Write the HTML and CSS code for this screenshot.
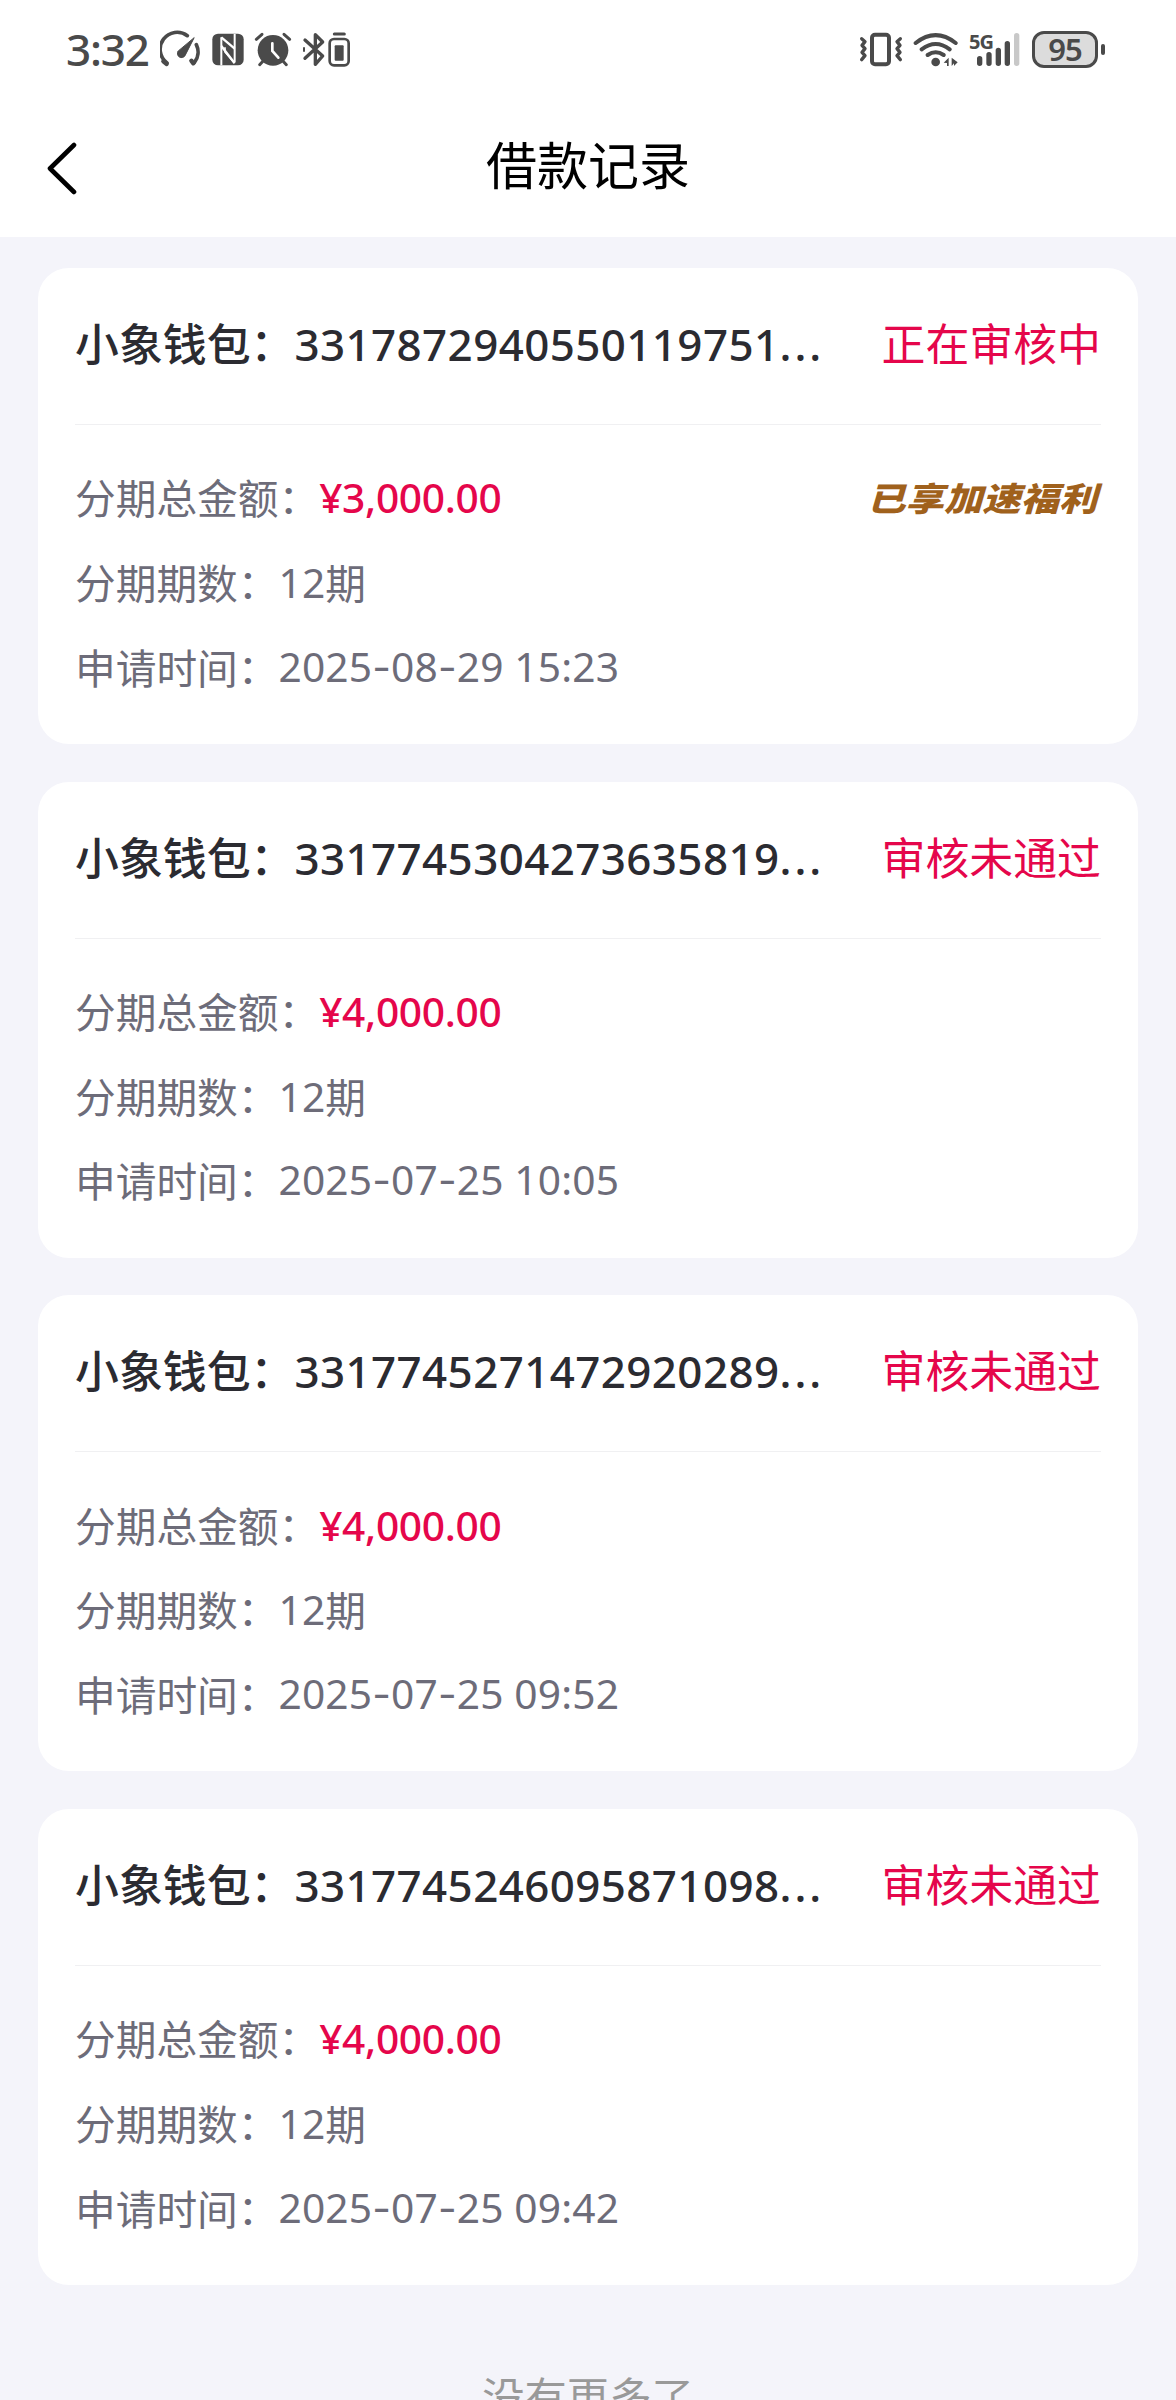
FILE: index.html
```html
<!DOCTYPE html>
<html lang="zh-CN">
<head>
    <meta charset="UTF-8">
    <meta name="viewport" content="width=device-width, initial-scale=1.0">
    <title>借款记录</title>
    <link rel="stylesheet" href="styles.css">
</head>
<body>
    <div class="page">
        <div class="top">
            <div class="statusbar">
                <div class="statusbar-left">
                    <span class="clock">3:32</span>
                    <svg class="icon gauge" width="40" height="40" viewBox="330 30 120 120" fill="none" stroke="#4a4a4a" stroke-width="11" stroke-linecap="round">
                        <path d="M351 129A51 51 0 0 1 412 47"/>
                        <path d="M439 74A51 51 0 0 1 433 128"/>
                        <path d="M340 124l10 8M424 122l6 8" stroke-width="13"/>
                        <path d="M432 54L405 107a12 12 0 1 1-21-13z" fill="#4a4a4a" stroke-width="3" stroke-linejoin="round"/>
                    </svg>
                    <svg class="icon nfc" width="32" height="40" viewBox="485 30 96 120">
                        <rect x="486" y="41" width="94" height="95" rx="17" fill="#4a4a4a"/>
                        <path d="M513 136V52M553 42v84" fill="none" stroke="#fff" stroke-width="6"/>
                        <path d="M513 52l40 34M513 78l40 52" fill="none" stroke="#fff" stroke-width="7"/>
                        <path d="M524 82v14l26 30" fill="none" stroke="#fff" stroke-width="5"/>
                    </svg>
                    <svg class="icon alarm" width="38" height="40" viewBox="612 30 114 120" fill="none" stroke="#4a4a4a" stroke-width="9" stroke-linecap="round">
                        <circle cx="669" cy="91" r="46" fill="#4a4a4a" stroke="none"/>
                        <path d="M619 58l17-15M702 43l17 15M640 122l-11 12M698 122l11 12"/>
                        <path d="M667 70v23l18 20" stroke="#fff" stroke-width="8"/>
                    </svg>
                    <svg class="icon bluetooth" width="24" height="40" viewBox="756 30 72 120" fill="none" stroke="#4a4a4a" stroke-width="10" stroke-linecap="round" stroke-linejoin="round">
                        <path d="M765 60l53 48-22 25V44l22 22-53 49"/>
                        <path d="M762 84v9" stroke-width="6"/>
                    </svg>
                    <svg class="icon device" width="24" height="40" viewBox="832 30 72 120">
                        <path d="M854 42h30" stroke="#4a4a4a" stroke-width="9" stroke-linecap="round"/>
                        <rect x="840" y="57" width="57" height="79" rx="13" fill="none" stroke="#4a4a4a" stroke-width="8"/>
                        <rect x="855" y="76" width="27" height="46" rx="3" fill="#4a4a4a"/>
                    </svg>
                </div>
                <div class="statusbar-right">
                    <svg class="icon vibrate" width="44" height="40" viewBox="58 30 132 120" fill="none" stroke="#4a4a4a" stroke-linecap="round" stroke-linejoin="round">
                        <rect x="97" y="44" width="51" height="89" rx="9" stroke-width="12"/>
                        <path d="M66 56l10 9-9 11 9 10-9 11 9 10-10 12M182 56l-10 9 9 11-9 10 9 11-9 10 10 12" stroke-width="10"/>
                    </svg>
                    <svg class="icon wifi" width="46" height="40" viewBox="220 30 138 120" fill="none" stroke="#4a4a4a" stroke-width="12" stroke-linecap="round">
                        <path d="M228 69Q288 22 348 69M246 88Q288 56 330 88M264 105Q288 88 312 105"/>
                        <circle cx="288" cy="126" r="13" fill="#4a4a4a" stroke="none"/>
                        <path d="M312 128l15-15v25h-5v-9zM336 113l18 14-11 11v-8l-7 8z" fill="#4a4a4a" stroke="none"/>
                    </svg>
                    <div class="signal">
                        <span class="network">5G</span>
                        <svg class="icon" width="52" height="40" viewBox="388 30 156 120" stroke="#4a4a4a" stroke-width="16" stroke-linecap="round">
                            <path d="M420 116v14M448 104v26M476 91v39M503 71v59"/>
                            <path d="M531 47v83" stroke="#c8c8c8"/>
                        </svg>
                    </div>
                    <div class="battery"><span class="battery-level">95</span></div>
                    <div class="battery-tip"></div>
                </div>
            </div>
            <div class="navbar">
                <svg class="back" width="32" height="54" viewBox="0 0 32 54" fill="none" stroke="#000" stroke-width="4.6" stroke-linecap="round" stroke-linejoin="round">
                    <path d="M28 4L4 27.500L28 51"/>
                </svg>
                <h1 class="title">借款记录</h1>
            </div>
        </div>

        <div class="list">
            <div class="card">
                <div class="card-head">
                    <div class="order">小象钱包：<span class="num">3317872940550119751</span><span class="dots">...</span></div>
                    <div class="state">正在审核中</div>
                </div>
                <div class="card-body">
                    <div class="row">分期总金额：<span class="amount">¥3,000.00</span><span class="benefit">已享加速福利</span></div>
                    <div class="row">分期期数：<span class="num">12</span>期</div>
                    <div class="row">申请时间：<span class="num">2025<i>-</i>08<i>-</i>29 15:23</span></div>
                </div>
            </div>

            <div class="card">
                <div class="card-head">
                    <div class="order">小象钱包：<span class="num">3317745304273635819</span><span class="dots">...</span></div>
                    <div class="state">审核未通过</div>
                </div>
                <div class="card-body">
                    <div class="row">分期总金额：<span class="amount">¥4,000.00</span></div>
                    <div class="row">分期期数：<span class="num">12</span>期</div>
                    <div class="row">申请时间：<span class="num">2025<i>-</i>07<i>-</i>25 10:05</span></div>
                </div>
            </div>

            <div class="card">
                <div class="card-head">
                    <div class="order">小象钱包：<span class="num">3317745271472920289</span><span class="dots">...</span></div>
                    <div class="state">审核未通过</div>
                </div>
                <div class="card-body">
                    <div class="row">分期总金额：<span class="amount">¥4,000.00</span></div>
                    <div class="row">分期期数：<span class="num">12</span>期</div>
                    <div class="row">申请时间：<span class="num">2025<i>-</i>07<i>-</i>25 09:52</span></div>
                </div>
            </div>

            <div class="card">
                <div class="card-head">
                    <div class="order">小象钱包：<span class="num">3317745246095871098</span><span class="dots">...</span></div>
                    <div class="state">审核未通过</div>
                </div>
                <div class="card-body">
                    <div class="row">分期总金额：<span class="amount">¥4,000.00</span></div>
                    <div class="row">分期期数：<span class="num">12</span>期</div>
                    <div class="row">申请时间：<span class="num">2025<i>-</i>07<i>-</i>25 09:42</span></div>
                </div>
            </div>
        </div>

        <div class="no-more">没有更多了</div>
    </div>
</body>
</html>
```

FILE: styles.css
```css
* {
    box-sizing: border-box;
}
body {
    margin: 0;
    background: #f4f4fa;
    font-family: "Noto Sans CJK SC", sans-serif;
}
.page {
    height: 2400px;
    overflow: hidden;
}
.top {
    height: 237px;
    background: #fff;
}
.statusbar {
    display: flex;
    justify-content: space-between;
    height: 90px;
    padding: 30px 71px 0 66px;
    color: #4a4a4a;
    font-family: "Noto Sans", sans-serif;
}
.statusbar-left,
.statusbar-right {
    display: flex;
    height: 40px;
}
.icon {
    display: block;
}
.clock {
    width: 94px;
    font-size: 44px;
    font-weight: 500;
    letter-spacing: -1.200px;
    line-height: 39px;
}
.nfc {
    margin-left: 12px;
}
.alarm {
    margin-left: 10px;
}
.bluetooth {
    margin-left: 10px;
}
.device {
    margin-left: 1px;
}
.wifi {
    margin-left: 10px;
}
.signal {
    position: relative;
    margin-left: 10px;
}
.network {
    position: absolute;
    top: 0;
    left: 0;
    font-size: 20px;
    font-weight: 700;
    letter-spacing: -1px;
    line-height: 23px;
}
.battery {
    width: 66px;
    height: 37px;
    margin: 1px 0 0 11px;
    border: 3px solid #4a4a4a;
    border-radius: 12px;
    background: #dcdcdc;
    font-size: 31px;
    font-weight: 600;
    letter-spacing: -1px;
    line-height: 30px;
    text-align: center;
}
.battery-tip {
    width: 4px;
    height: 11px;
    margin: 14px 0 0 3px;
    border-radius: 2px;
    background: #4a4a4a;
}
.navbar {
    display: flex;
    align-items: center;
    height: 150px;
    padding: 0 46px;
}
.back {
    margin-top: 6px;
}
.title {
    flex: 1;
    margin: 0 32px 5px 0;
    font-size: 51px;
    font-weight: 400;
    line-height: 74px;
    text-align: center;
    color: #000;
}
.list {
    display: flex;
    flex-direction: column;
    gap: 37.700px;
    padding: 31px 38px 0;
}
.card {
    height: 476px;
    padding: 0 37px;
    border-radius: 31px;
    background: #fff;
}
.card-head {
    display: flex;
    justify-content: space-between;
    height: 157px;
    border-bottom: 1px solid #f0f0f2;
    font-size: 43.900px;
    line-height: 149px;
    white-space: nowrap;
}
.order {
    font-weight: 500;
    color: #2b2b31;
}
.num,
.amount {
    font-family: "Noto Sans", sans-serif;
}
.order .num {
    letter-spacing: 0.420px;
}
.dots {
    font-family: "Noto Sans", sans-serif;
    letter-spacing: 3px;
}
.state {
    color: #e5064b;
}
.card-body {
    padding-top: 30px;
}
.row {
    display: flex;
    align-items: center;
    height: 84.700px;
    font-size: 40.700px;
    line-height: 84px;
    color: #6d6c79;
    white-space: pre;
}
.row .num {
    letter-spacing: 0.150px;
}
.row i {
    font-family: Inter, sans-serif;
    font-style: normal;
}
.amount {
    font-weight: 500;
    letter-spacing: -0.300px;
    color: #e5064b;
}
.benefit {
    margin-right: 4px;
    margin-left: auto;
    font-size: 33px;
    font-style: italic;
    font-weight: 900;
    color: #a0611c;
    transform: scaleX(1.160);
    transform-origin: right;
}
.no-more {
    margin-top: 79px;
    font-size: 42.300px;
    line-height: 62px;
    text-align: center;
    color: #999;
}
```
